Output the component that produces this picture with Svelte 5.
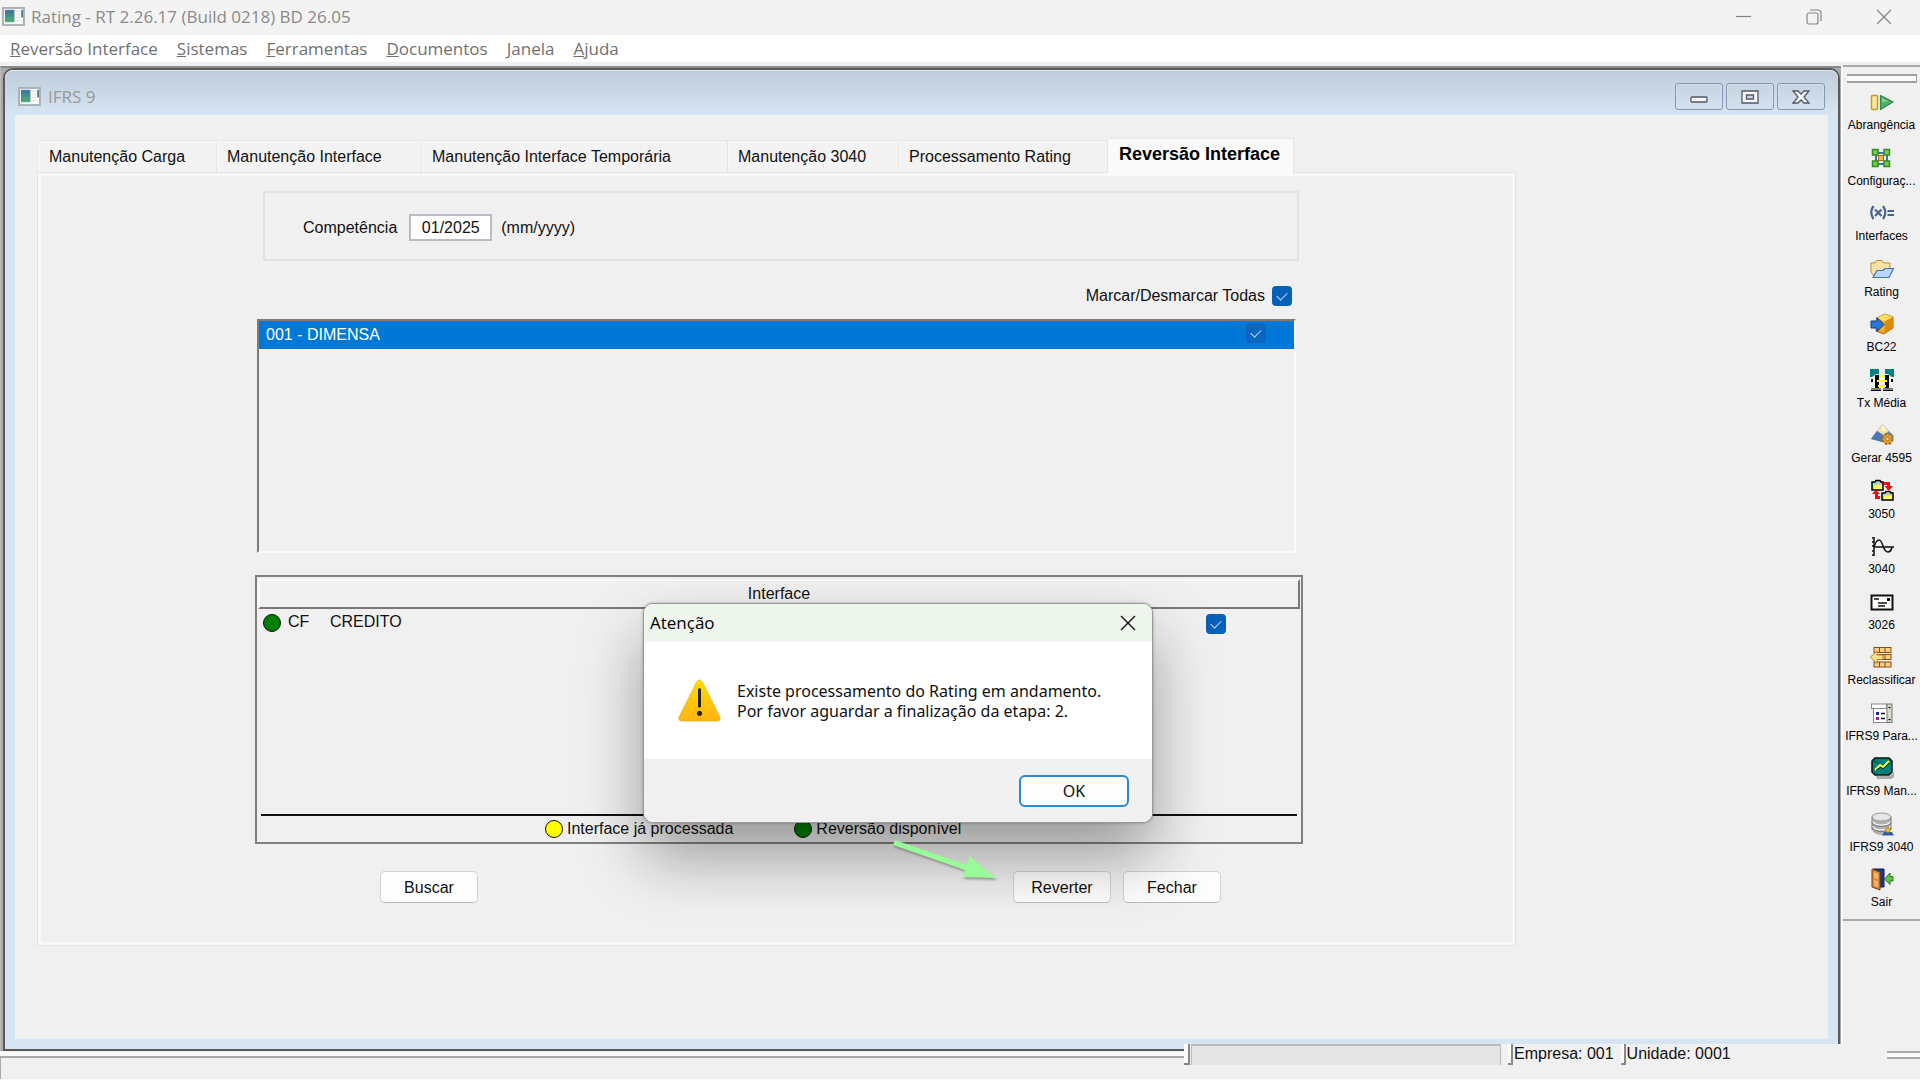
<script lang="ts">
  const menus = ['Reversão Interface', 'Sistemas', 'Ferramentas', 'Documentos', 'Janela', 'Ajuda'];

  const tabs = [
    { label: 'Manutenção Carga', size: 't1' },
    { label: 'Manutenção Interface', size: 't2' },
    { label: 'Manutenção Interface Temporária', size: 't3' },
    { label: 'Manutenção 3040', size: 't4' },
    { label: 'Processamento Rating', size: 't5' },
    { label: 'Reversão Interface', size: 't6' },
  ];
  let active = $state(5);
  let competencia = $state('01/2025');

  const tools = [
    {
      label: 'Abrangência',
      icon: `<rect x="1.5" y="5.500" width="6" height="14" rx="1" fill="#fbe99a" stroke="#c49a2a" stroke-width="1.500"/><path d="M10.500 5.500 L23 12 L10.500 19.500Z" fill="#4fb268" stroke="#2e8b4d" stroke-width="1.200"/><path d="M12 8 L18 11.500 L12 12Z" fill="#8ad69a"/>`,
    },
    {
      label: 'Configuraç...',
      icon: `<path d="M6 7H17V18H6Z" fill="none" stroke="#3f6fae" stroke-width="2"/><path d="M6 7L17 18M17 7L6 18" stroke="#7d96b8" stroke-width="1"/><g fill="#74cc4a" stroke="#2f8f23" stroke-width="1.500"><rect x="2.500" y="3.500" width="5.500" height="5.500"/><rect x="14" y="3.500" width="5.500" height="5.500"/><rect x="2.500" y="15" width="5.500" height="5.500"/><rect x="14" y="15" width="5.500" height="5.500"/></g><rect x="8.500" y="9.500" width="5" height="5" fill="#f3b845" stroke="#a8641a"/>`,
    },
    {
      label: 'Interfaces',
      icon: `<g fill="none" stroke="#486590" stroke-width="2.200"><path d="M3.500 5Q-1 11.500 3.500 18M13 5Q17.500 11.500 13 18"/><path d="M5 8.500L11.500 15M11.500 8.500L5 15"/><path d="M17.500 10H24M17.500 14H24" stroke-width="1.800"/></g>`,
    },
    {
      label: 'Rating',
      icon: `<path d="M1 6H5L6.500 3.500H12L13.500 6H20V14L16 19H4L1 15Z" fill="#fbe3a6" stroke="#c58b3a"/><path d="M7 13.500L13 13.500L15 11.500L23.500 11.500L19 20.500H3Z" fill="#b9d8fb" stroke="#3f6fc0" stroke-width="1.200"/>`,
    },
    {
      label: 'BC22',
      icon: `<path d="M7 6L15 2L23 5V16L14 22L6 19Z" fill="#f5ae1c" stroke="#9a6410"/><path d="M7 6L15 2L23 5L15 9.500Z" fill="#ffdf62"/><path d="M15 9.500L23 5V16L14.500 22Z" fill="#d98a10"/><path d="M1 9H7V5.500L14 12.500L7 19.500V16H1Z" fill="#2878dc" stroke="#12397c"/>`,
    },
    {
      label: 'Tx Média',
      icon: `<path d="M0 1H9V6H6L2 9H0ZM24 1H15V6H18L22 9H24Z" fill="#008080"/><path d="M5 7H9V20H11V23H1V20H5ZM15 7H19V20H23V23H13V20H15Z" fill="#000"/><path d="M2 11V14M22 11V14" stroke="#000" stroke-width="2"/><path d="M9 7H15V9H9ZM7 12H17V14H7ZM8 17H16V19H8Z" fill="#ffff00"/><path d="M1 21H11M13 21H23" stroke="#fff"/>`,
    },
    {
      label: 'Gerar 4595',
      icon: `<path d="M12 1L24 13L18 20L1 16Z" fill="#6d8fbe"/><path d="M12 1L19 8L13 12L7 8Z" fill="#f4e3a0"/><path d="M1 16L7 8L13 12L12 19Z" fill="#4c78b5"/><path d="M12 1L16 8L12 8Z" fill="#fff" opacity=".7"/><circle cx="17.500" cy="16" r="5" fill="#e2a33a" stroke="#a86c1e" stroke-width="2" stroke-dasharray="2.500 1.500"/><circle cx="17.500" cy="16" r="1.800" fill="#f5e2bc" stroke="#a86c1e"/>`,
    },
    {
      label: '3050',
      icon: `<g stroke="#000" stroke-width="1.500"><path d="M2 3H5L6 1.500H10L11 3H13V11H2Z" fill="#c6c6c6"/><path d="M12 14H15L16 12.500H20L21 14H23V21H12Z" fill="#c6c6c6"/></g><path d="M4 6H12V10H4ZM14 16.500H22V20H14Z" fill="#ffff5a"/><path d="M14 3H20V7H23L18.500 12L14.500 7H17V6H14ZM10 20H5V15H2L6 10.500L10 15H8V17H10Z" fill="#ee1111"/>`,
    },
    {
      label: '3040',
      icon: `<g fill="none" stroke="#111" stroke-width="1.500"><path d="M3 3V22M1 4H3M1 8H3M1 12H3M1 17H3M1 21H3" transform="translate(1 0)"/><path d="M4 13H24"/><path d="M4 13Q6 6 9 6Q11 6 13 12Q15 18 18 18Q21 18 22 13"/></g>`,
    },
    {
      label: '3026',
      icon: `<rect x="1.500" y="5.500" width="21" height="14" fill="#fff" stroke="#111" stroke-width="2"/><path d="M4 9H9M8 13H17M8 16H15" stroke="#111" stroke-width="1.500"/><rect x="17" y="8" width="3" height="3" fill="#111"/>`,
    },
    {
      label: 'Reclassificar',
      icon: `<g fill="#f9cf84" stroke="#8b4b17" stroke-width="1"><rect x="4" y="2.500" width="17" height="5"/><rect x="8" y="9.500" width="13" height="5"/><rect x="4" y="17" width="17" height="5"/><path d="M9.500 2.500V7.500M15 2.500V7.500M15 9.500V14.500M9.500 17V22M15 17V22"/></g><path d="M0.500 12L7 6V10H13V14.500H7V18.500Z" fill="#ffe08a" stroke="#c17c1d"/>`,
    },
    {
      label: 'IFRS9 Para...',
      icon: `<rect x="1.500" y="3" width="15" height="4.500" fill="#fff" stroke="#888"/><rect x="3.500" y="7.500" width="18" height="14" fill="#fff" stroke="#888"/><rect x="17" y="3" width="5" height="18.500" fill="#d8d8cc" stroke="#777"/><path d="M18 6H21L19.500 7.500ZM18 18H21L19.500 19.500Z" fill="#000"/><path d="M6 11H9V14H6Z" fill="#2222aa"/><path d="M6 16H9V19H6Z" fill="#a020a0"/><path d="M11 12.500H15M11 17.500H15" stroke="#111" stroke-width="1.500"/>`,
    },
    {
      label: 'IFRS9 Man...',
      icon: `<path d="M6 20H20L24 16V21L21 23H7Z" fill="#aaa"/><path d="M2 5L5 2H19L22 5V16L19 19H5L2 16Z" fill="#008078" stroke="#111" stroke-width="1.500"/><path d="M2 4L12 10L22 4" fill="none" stroke="#003c3c"/><path d="M5 14L10 9L13 11L19 5" fill="none" stroke="#ffff40" stroke-width="2"/><path d="M6 14L11 11L13 13L19 7" fill="none" stroke="#111" stroke-width=".8"/>`,
    },
    {
      label: 'IFRS9 3040',
      icon: `<path d="M2 5V18Q4 23 12 23Q19 23 21 18V5Z" fill="#b0b0b0"/><ellipse cx="11.500" cy="5" rx="9.500" ry="4" fill="#e6e6e6" stroke="#9a9a9a"/><g fill="none"><path d="M2 9Q4 13 11.500 13Q19 13 21 9M2 14Q4 18 11.500 18Q19 18 21 14" stroke="#fff" stroke-width="1.200"/><path d="M2 10.500Q4 14.500 11.500 14.500Q19 14.500 21 10.500M2 15.500Q4 19.500 11.500 19.500Q19 19.500 21 15.500M2 5V18M21 5V18" stroke="#777" stroke-width="1"/></g><path d="M12 23.500L14 20H22L24 23.500Z" fill="#345fa8"/><path d="M18 15L20.500 18L18 21L15.500 18Z" fill="#f5c331" stroke="#b57e12"/>`,
    },
    {
      label: 'Sair',
      icon: `<path d="M3 2H14V20H3Z" fill="#16398a" stroke="#0c1e4c"/><path d="M2 2L10 5V23L2 20Z" fill="#dc8a35" stroke="#7c3d10"/><path d="M4 5L8 6.500V12L4 11ZM4 13L8 14.500V20L4 18.500Z" fill="#f2b566"/><path d="M23 9.500H20V6L14.500 12L20 17.500V14H23Z" fill="#5cc443" stroke="#247a1c"/>`,
    },
  ];
</script>

{#snippet appIcon()}
  <svg class="app-icon" viewBox="0 0 24 20" aria-hidden="true">
    <defs>
      <linearGradient id="pane" x1="0" y1="0" x2="0" y2="1">
        <stop offset="0" stop-color="#3f73a0" />
        <stop offset="1" stop-color="#52ad78" />
      </linearGradient>
    </defs>
    <rect x="1" y="1" width="22" height="18" fill="#fbfbfb" stroke="#a9b0b5" stroke-width="2" />
    <rect x="3" y="3" width="10" height="13" fill="url(#pane)" />
    <path d="M15 5h4M15 8h4M15 11h4M15 14h4" stroke="#dcdcdc" />
    <rect x="20" y="3" width="2" height="8" fill="#4c8f93" />
  </svg>
{/snippet}

<div class="app">
  <header class="titlebar">
    {@render appIcon()}
    <h1>Rating - RT 2.26.17 (Build 0218) BD 26.05</h1>
    <div class="sys">
      <button aria-label="Minimizar"><svg viewBox="0 0 16 16"><path d="M0 7.500h15" /></svg></button>
      <button aria-label="Restaurar">
        <svg viewBox="0 0 16 16"><rect x="1" y="4" width="11" height="11" rx="2" /><path d="M4 1h8q3 0 3 3v8" /></svg>
      </button>
      <button aria-label="Fechar janela"><svg viewBox="0 0 16 16"><path d="M1 1l14 14M15 1L1 15" /></svg></button>
    </div>
  </header>

  <nav class="menubar">
    {#each menus as m}
      <button><u>{m[0]}</u>{m.slice(1)}</button>
    {/each}
  </nav>

  <div class="body">
    <main class="mdi">
      <section class="child">
        <header class="child-title">
          {@render appIcon()}
          <h2>IFRS 9</h2>
          <div class="child-sys">
            <button aria-label="Minimizar IFRS 9">
              <svg viewBox="0 0 20 16"><rect x="2" y="8" width="16" height="5" rx="1" /></svg>
            </button>
            <button aria-label="Maximizar IFRS 9">
              <svg viewBox="0 0 20 16"><path fill-rule="evenodd" d="M2 2h16v12H2ZM6.500 6v4h7V6Z" /></svg>
            </button>
            <button aria-label="Fechar IFRS 9">
              <svg viewBox="0 0 20 16"><path d="M2 2h5l3 3 3-3h5l-5 6 5 6h-5l-3-3-3 3H2l5-6Z" /></svg>
            </button>
          </div>
        </header>

        <div class="content">
          <div class="tabs" role="tablist">
            {#each tabs as t, i}
              <button role="tab" aria-selected={i === active} class={t.size} class:active={i === active} onclick={() => (active = i)}>{t.label}</button>
            {/each}
          </div>

          <div class="panel" role="tabpanel">
            <div class="group">
              <label for="comp">Competência</label>
              <input id="comp" type="text" bind:value={competencia} />
              <span>(mm/yyyy)</span>
            </div>

            <div class="all">
              <label for="todas">Marcar/Desmarcar Todas</label>
              <input id="todas" type="checkbox" checked />
            </div>

            <div class="companies">
              <div class="company">
                <label for="c001">001 - DIMENSA</label>
                <input id="c001" class="dim" type="checkbox" checked />
              </div>
            </div>

            <div class="interfaces">
              <table>
                <thead>
                  <tr><th colspan="4">Interface</th></tr>
                </thead>
                <tbody>
                  <tr>
                    <td class="c-dot"><i class="dot green"></i></td>
                    <td class="c-code">CF</td>
                    <td class="c-name">CREDITO</td>
                    <td class="c-check"><input type="checkbox" aria-label="CREDITO" checked /></td>
                  </tr>
                </tbody>
              </table>
              <div class="legend">
                <span><i class="dot yellow"></i>Interface já processada</span>
                <span><i class="dot green"></i>Reversão disponível</span>
              </div>
            </div>

            <div class="actions">
              <button>Buscar</button>
              <div>
                <button>Reverter</button>
                <button>Fechar</button>
              </div>
            </div>

            <div class="dialog" role="alertdialog" aria-labelledby="dlg-title">
              <header>
                <h3 id="dlg-title">Atenção</h3>
                <button aria-label="Fechar aviso"><svg viewBox="0 0 16 16"><path d="M1 1l14 14M15 1L1 15" /></svg></button>
              </header>
              <div class="message">
                <svg viewBox="0 0 44 44" aria-hidden="true">
                  <defs>
                    <linearGradient id="warn" x1="0" y1="0" x2="0" y2="1">
                      <stop offset="0" stop-color="#ffdf00" />
                      <stop offset="1" stop-color="#ffb313" />
                    </linearGradient>
                  </defs>
                  <path d="M19 3q3-4 6 0L43 39q1 4-3 4H4q-4 0-3-4Z" fill="url(#warn)" stroke="#e9a51c" stroke-width=".6" />
                  <path d="M22 11v17" stroke="#222" stroke-width="3" stroke-linecap="round" />
                  <circle cx="22" cy="35" r="2.600" fill="#222" />
                </svg>
                <p>Existe processamento do Rating em andamento.<br />Por favor aguardar a finalização da etapa: 2.</p>
              </div>
              <footer><button>OK</button></footer>
            </div>

            <svg class="arrow" viewBox="0 0 110 48" aria-hidden="true">
              <path d="M5 4L77 29L80 20L106 42L73 41L75 34L3 9Z" />
            </svg>
          </div>
        </div>
      </section>
    </main>

    <aside class="toolbar">
      <div class="grip"></div>
      <div class="tools">
        {#each tools as t}
          <button><svg viewBox="0 0 24 24" aria-hidden="true">{@html t.icon}</svg><span>{t.label}</span></button>
        {/each}
      </div>
    </aside>
  </div>

  <footer class="status">
    <div class="status-left"></div>
    <div class="status-right">
      <i class="sep"></i>
      <div class="progress"></div>
      <i class="sep"></i><span>Empresa: 001</span>
      <i class="sep"></i><span>Unidade: 0001</span>
      <div class="grip-end"></div>
    </div>
  </footer>
</div>

<style>
  :global(body) {
    margin: 0;
    background: #f0f0f0;
  }
  :global(*) {
    box-sizing: border-box;
  }
  .app {
    min-height: 100vh;
    display: flex;
    flex-direction: column;
    background: #f0f0f0;
    color: #111;
    font: 16px/20px 'Liberation Sans', Arial, sans-serif;
    overflow: hidden;
  }
  button {
    margin: 0;
    padding: 0;
    border: 0;
    background: none;
    color: inherit;
    font: inherit;
    white-space: nowrap;
  }
  svg {
    display: block;
  }
  h1, h2, h3, p {
    margin: 0;
    font-weight: 400;
  }

  .titlebar {
    height: 35px;
    display: flex;
    align-items: center;
    gap: 6px;
    padding: 0 20px 2px 2px;
    background: #f3f3f3;
  }
  .app-icon {
    width: 23px;
    height: 19px;
    flex: none;
  }
  h1 {
    font: 17px/22px 'Open Sans', 'Noto Sans', sans-serif;
    color: #8a8a8a;
  }
  .sys {
    margin-left: auto;
    display: flex;
    gap: 38px;
  }
  .sys button {
    width: 32px;
    height: 33px;
    display: grid;
    place-items: center;
  }
  .sys svg {
    width: 16px;
    height: 16px;
    fill: none;
    stroke: #858585;
    stroke-width: 1.2;
  }
  .menubar {
    height: 27px;
    display: flex;
    align-items: center;
    gap: 19px;
    padding: 1px 10px 0;
    background: #fff;
    color: #707070;
    font: 17px/22px 'Open Sans', 'Noto Sans', sans-serif;
  }

  .body {
    flex: 1;
    display: flex;
    gap: 2px;
  }
  .mdi {
    flex: 1;
    min-width: 0;
    display: flex;
    margin: 4px 0;
    padding: 0 1px 0 2px;
    border-top: 2px solid #8b8b8b;
    border-left: 1px solid #bbb;
    background: #aaa;
  }
  .child {
    flex: 1;
    min-width: 0;
    display: flex;
    flex-direction: column;
    border: 2px solid #5a5a5a;
    border-radius: 10px 10px 0 0;
    background: #d7e4f2;
  }
  .child-title {
    height: 45px;
    display: flex;
    align-items: center;
    gap: 7px;
    padding: 7px 13px 0;
    border-top: 1px solid #dfe8f1;
    border-radius: 8px 8px 0 0;
    background: linear-gradient(#bfccda, #d7e4f2);
  }
  h2 {
    font: 17px/22px 'Open Sans', 'Noto Sans', sans-serif;
    color: #9a9a9a;
  }
  .child-sys {
    margin-left: auto;
    display: flex;
    gap: 3px;
  }
  .child-sys button {
    width: 48px;
    height: 27px;
    display: grid;
    place-items: center;
    border: 1px solid #8596b3;
    border-radius: 3px;
    box-shadow: inset 0 0 0 1px #d3dfec;
  }
  .child-sys svg {
    width: 20px;
    height: 16px;
    fill: #f8f8f8;
    stroke: #525868;
    stroke-width: 1.3;
  }
  .content {
    flex: 1;
    margin: 0 10px 10px;
    padding: 23px 22px;
    background: #f0f0f0;
  }

  .tabs {
    height: 34px;
    display: flex;
    align-items: flex-end;
    padding-left: 2px;
  }
  .tabs button {
    flex: none;
    height: 32px;
    padding-left: 9px;
    border: 1px solid #e6e6e6;
    border-bottom: 0;
    border-left-color: #f8f8f8;
    background: #f3f3f3;
    text-align: left;
  }
  .tabs .active {
    position: relative;
    z-index: 1;
    height: 37px;
    margin-bottom: -3px;
    padding: 0 0 6px 10px;
    background: #fafafa;
    color: #000;
    font-size: 18px;
    font-weight: 700;
  }
  .t1 { width: 178px; }
  .t2 { width: 205px; }
  .t3 { width: 306px; }
  .t4 { width: 171px; }
  .t5 { width: 209px; }
  .t6 { width: 186px; }

  .panel {
    position: relative;
    max-width: 1479px;
    padding: 18px 212px 42px 217px;
    border: 1px solid #e2e2e2;
    box-shadow: inset 0 0 0 3px #f8f8f8;
  }
  .group {
    height: 70px;
    display: flex;
    align-items: center;
    margin: 0 4px 0 8px;
    padding: 3px 0 0 38px;
    border: 2px solid #e2e2e2;
  }
  .group input {
    width: 83px;
    height: 27px;
    margin: 0 9px 0 12px;
    padding: 0;
    border: 2px solid #b9bcc6;
    background: #fff;
    color: inherit;
    font: inherit;
    text-align: center;
  }
  .all {
    display: flex;
    align-items: center;
    justify-content: flex-end;
    gap: 7px;
    margin: 25px 11px 13px 0;
  }
  input[type='checkbox'] {
    appearance: none;
    flex: none;
    display: grid;
    place-items: center;
    width: 20px;
    height: 20px;
    margin: 0;
    border-radius: 4px;
    background: #0560b8;
  }
  input[type='checkbox']:checked::after {
    content: '';
    width: 5px;
    height: 9px;
    margin-bottom: 3px;
    border: solid #b9d6f0;
    border-width: 0 1px 1px 0;
    transform: rotate(45deg);
  }
  input.dim {
    background: #0c66c0;
  }
  .companies {
    height: 234px;
    margin: 0 7px 0 2px;
    border: 2px solid;
    border-color: #7c7c7c #fafafa #fafafa #7c7c7c;
  }
  .company {
    height: 28px;
    display: flex;
    align-items: center;
    justify-content: space-between;
    padding: 0 28px 4px 7px;
    background: #0078d7;
    color: #fff;
  }
  .company label {
    padding-top: 4px;
  }

  .interfaces {
    height: 269px;
    display: flex;
    flex-direction: column;
    justify-content: space-between;
    margin-top: 22px;
    padding: 2px 1px 0;
    border: 2px solid #808080;
  }
  table {
    width: 100%;
    border-collapse: separate;
    border-spacing: 0;
  }
  th {
    height: 30px;
    padding: 0;
    border: 2px solid;
    border-color: #fafafa #777 #777 #fafafa;
    font-weight: 400;
  }
  td {
    height: 30px;
    padding: 0;
  }
  .c-dot { width: 30px; padding: 0 0 2px 5px; }
  .c-code { width: 42px; padding-bottom: 4px; }
  .c-name { padding-bottom: 4px; }
  .c-check { width: 94px; }
  .dot {
    display: block;
    flex: none;
    width: 18px;
    height: 18px;
    border: 1px solid #111;
    border-radius: 50%;
  }
  .green { background: #008000; }
  .yellow { background: #ffff00; }
  .legend {
    height: 28px;
    display: flex;
    gap: 61px;
    margin: 0 3px;
    padding-left: 284px;
    border-top: 2px solid #111;
  }
  .legend span {
    display: flex;
    align-items: center;
    gap: 4px;
  }
  .actions {
    display: flex;
    justify-content: space-between;
    margin: 27px 82px 0 125px;
  }
  .actions div {
    display: flex;
    gap: 12px;
  }
  .actions button {
    width: 98px;
    height: 32px;
    border: 1px solid #d2d2d2;
    border-bottom-color: #bbb;
    border-radius: 5px;
    padding-top: 1px;
    background: #fdfdfd;
  }

  .dialog {
    position: absolute;
    left: 605px;
    top: 430px;
    width: 510px;
    border: 1px solid #999;
    border-radius: 10px;
    background: #fff;
    box-shadow: 0 0 3px rgba(0, 0, 0, 0.3), 0 34px 64px rgba(0, 0, 0, 0.36);
    font: 16px/20px 'Noto Sans', 'Open Sans', sans-serif;
  }
  .dialog header {
    height: 38px;
    display: flex;
    align-items: center;
    justify-content: space-between;
    padding: 0 16px 0 6px;
    border-radius: 9px 9px 0 0;
    background: #eef5ec;
    color: #000;
  }
  h3 {
    font: 17px/20px 'Open Sans', 'Noto Sans', sans-serif;
  }
  .dialog header svg {
    width: 16px;
    height: 16px;
    fill: none;
    stroke: #111;
    stroke-width: 1.4;
  }
  .message {
    height: 117px;
    display: flex;
    align-items: center;
    gap: 16px;
    padding-left: 34px;
  }
  .message svg {
    flex: none;
    width: 43px;
    height: 43px;
  }
  .message p {
    white-space: nowrap;
  }
  .dialog footer {
    height: 63px;
    display: flex;
    align-items: center;
    justify-content: flex-end;
    padding-right: 23px;
    border-radius: 0 0 9px 9px;
    background: #f0f0f0;
  }
  .dialog footer button {
    width: 110px;
    height: 32px;
    border: 2px solid #2b88d4;
    border-radius: 6px;
    background: #fdfdfd;
  }
  .arrow {
    position: absolute;
    left: 852px;
    top: 663px;
    width: 110px;
    height: 48px;
    fill: #98fb98;
    filter: drop-shadow(1px 2px 1px rgba(0, 0, 0, 0.3));
  }

  .toolbar {
    width: 77px;
    margin-top: 3px;
    border-top: 2px solid #a8a8a8;
    box-shadow: -2px 0 #fafafa;
  }
  .grip {
    height: 9px;
    margin: 7px 3px 3px 4px;
    border: solid #a0a0a0;
    border-width: 2px 1px 2px 0;
    background: #fafafa;
  }
  .tools {
    height: 835px;
    display: flex;
    flex-direction: column;
    border-bottom: 2px solid #a8a8a8;
  }
  .tools button {
    flex: 1;
    display: flex;
    flex-direction: column;
    align-items: center;
    gap: 4px;
    padding-top: 4px;
    color: #000;
    font-size: 12px;
    line-height: 14px;
  }
  .tools svg {
    width: 24px;
    height: 24px;
  }

  .status {
    height: 25px;
    display: flex;
    border-bottom: 1px solid #fafafa;
  }
  .status-left {
    flex: 1;
    margin-top: 1px;
    border-top: 2px solid #aaa;
    border-left: 1px solid #aaa;
    box-shadow: 0 -4px #fafafa;
  }
  .status-right {
    width: 736px;
    height: 35px;
    display: flex;
    margin-top: -11px;
    background: #f0f0f0;
  }
  .sep {
    width: 6px;
    height: 21px;
    margin-right: 1px;
    border: solid #888;
    border-width: 0 2px 2px 0;
    background: #fafafa;
  }
  .sep ~ .sep {
    width: 5px;
    margin-left: 7px;
  }
  .progress {
    width: 310px;
    height: 21px;
    border: 1px solid #bbb;
    border-top-width: 2px;
    border-bottom: 0;
    background: #e5e5e5;
  }
  .grip-end {
    width: 33px;
    height: 8px;
    margin: 7px 0 0 auto;
    border: solid #aaa;
    border-width: 2px 0;
    background: #fafafa;
  }
</style>
